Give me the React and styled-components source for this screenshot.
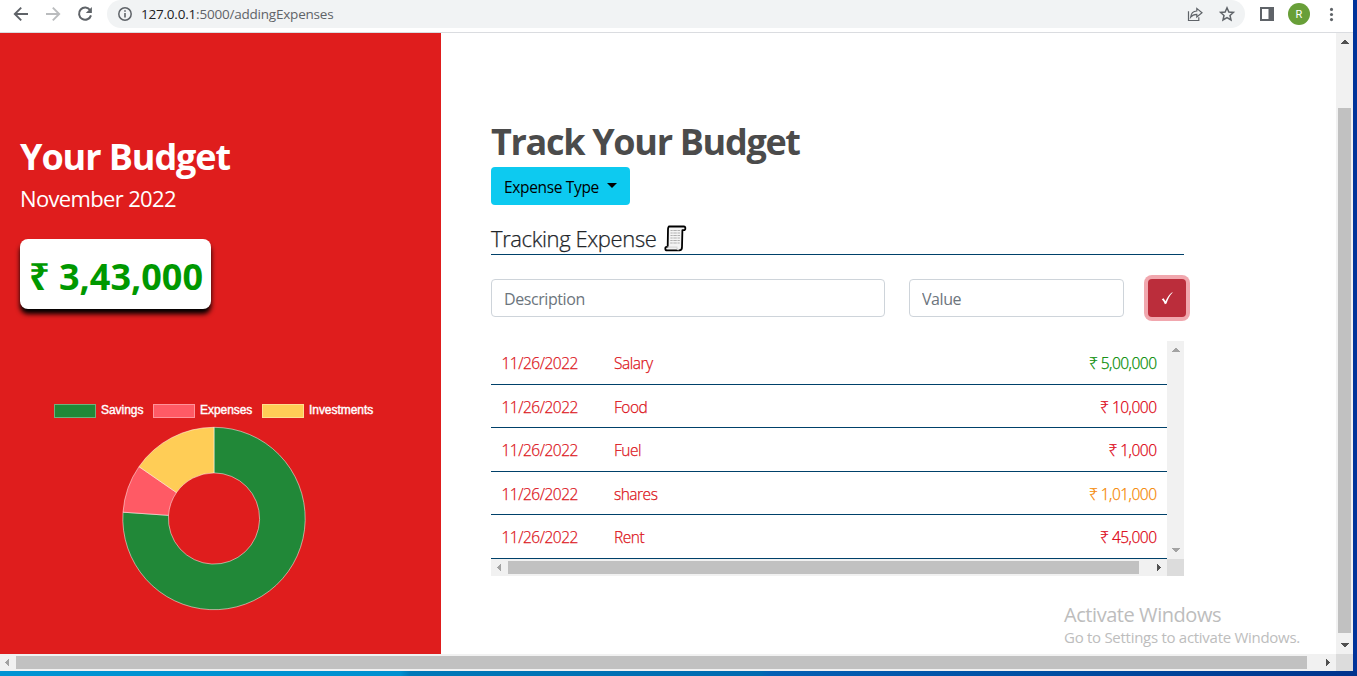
import React from "react";
import styled, { createGlobalStyle } from "styled-components";

const GlobalStyle = createGlobalStyle`
  * { box-sizing: border-box; }
  body { margin: 0; overflow: hidden; font-family: "Open Sans", "Noto Sans", sans-serif; color: #212529; }
  h1, h2, p { margin: 0; }
`;

const Desktop = styled.div`
  width: 1357px;
  height: 676px;
  padding: 0 4px 5px 0;
  background:
    linear-gradient(90deg, #0093d3 0, #0090d0 400px, #0078b8 410px, #006ab0 760px, #0560b4 770px, #004ea2 1050px, #00338d 1357px) left bottom / 100% 5px no-repeat,
    #00339a;
`;

const Browser = styled.div`
  width: 1353px;
  height: 671px;
  background: #fff;
  display: flex;
  flex-direction: column;
  overflow: hidden;
`;

const Toolbar = styled.header`
  height: 33px;
  flex: none;
  display: flex;
  align-items: flex-start;
  border-bottom: 1px solid #dadce0;
`;

const NavButtons = styled.div`
  width: 107px;
  height: 28px;
  padding-left: 12px;
  display: flex;
  align-items: center;
  gap: 14px;
`;

const AddressBar = styled.div`
  width: 1138px;
  height: 28px;
  padding: 0 9px;
  display: flex;
  align-items: center;
  background: #f1f3f4;
  border-radius: 14px;
`;

const Url = styled.span`
  flex: 1;
  margin-left: 7px;
  font-size: 13.5px;
  line-height: 28px;
  letter-spacing: -0.21px;
  color: #5f6368;
  b { font-weight: 400; color: #202124; }
`;

const BarActions = styled.div`
  display: flex;
  align-items: center;
  gap: 14px;
`;

const ToolbarTail = styled.div`
  height: 28px;
  padding-left: 14px;
  display: flex;
  align-items: center;
`;

const Avatar = styled.span`
  width: 22px;
  height: 22px;
  margin: 0 12px 0 13px;
  border-radius: 50%;
  background: #689f38;
  color: #fff;
  font: 11px/23px Roboto, sans-serif;
  text-align: center;
`;

const Viewport = styled.div`
  display: flex;
  height: 621px;
  flex: none;
`;

const Page = styled.main`
  display: flex;
  width: 1336px;
`;

const Sidebar = styled.aside`
  width: 441px;
  padding: 102px 0 0 20px;
  background: #df1d1d;
  color: #fff;
`;

const PanelTitle = styled.h1`
  font-size: 36px;
  line-height: 44px;
  font-weight: 700;
  letter-spacing: -1.08px;
`;

const Month = styled.p`
  margin-top: 5px;
  font-size: 22px;
  line-height: 28px;
  letter-spacing: -0.65px;
`;

const BalanceCard = styled.div`
  width: 191px;
  height: 70px;
  margin-top: 27px;
  padding: 3px 0 0 9px;
  border-radius: 8px;
  background: #fff;
  box-shadow: 0 5px 5px #000;
  color: #009800;
  font-size: 36px;
  line-height: 70px;
  font-weight: 700;
  letter-spacing: 0;
  white-space: nowrap;
`;

const Legend = styled.div`
  display: flex;
  margin: 95px 0 0 34px;
`;

const LegendItem = styled.div`
  width: ${(p) => p.$width}px;
  height: 14px;
  display: flex;
  align-items: center;
  gap: 5px;
  font: 12px/13px "Liberation Sans", sans-serif;
  letter-spacing: -0.05px;
  -webkit-text-stroke: 0.4px #fff;
`;

const Swatch = styled.span`
  width: 42px;
  height: 14px;
  flex: none;
  background: ${(p) => p.$color};
  border: 1px solid rgba(255, 255, 255, 0.35);
`;

const LegendLabel = styled.span`
  height: 14px;
  line-height: 12px;
`;

const Donut = styled.svg`
  display: block;
  margin: 8px 0 0 101px;
`;

const Content = styled.section`
  width: 895px;
  padding: 88px 152px 0 50px;
`;

const ContentTitle = styled.h1`
  font-size: 36px;
  line-height: 42px;
  font-weight: 700;
  letter-spacing: -1.32px;
  color: #4b4b4b;
`;

const TypeButton = styled.button`
  width: 139px;
  height: 38px;
  margin-top: 4px;
  padding: 1px 0 0 13px;
  display: flex;
  align-items: center;
  border: 0;
  border-radius: 4px;
  background: #0dcaf0;
  color: #000;
  font: 400 15.5px/38px "Open Sans", sans-serif;
  letter-spacing: -0.34px;
`;

const Caret = styled.span`
  margin: 0 0 2px 8px;
  border: 5px solid transparent;
  border-top-color: #000;
  border-bottom: 0;
`;

const SectionTitle = styled.h2`
  height: 33px;
  margin-top: 17px;
  display: flex;
  align-items: center;
  gap: 8px;
  border-bottom: 1px solid #00416a;
  font-size: 22px;
  line-height: 32px;
  font-weight: 300;
  letter-spacing: -0.38px;
  -webkit-text-stroke: 0.25px #212529;
`;

const EntryForm = styled.div`
  display: flex;
  margin-top: 24px;
  width: 695px;
`;

const Field = styled.input`
  width: ${(p) => p.$width}px;
  height: 38px;
  margin-right: ${(p) => p.$gap}px;
  padding: 1px 12px 0;
  border: 1px solid #ced4da;
  border-radius: 4px;
  font: 400 16px "Open Sans", sans-serif;
  letter-spacing: -0.42px;
  outline: 0;
  &::placeholder { color: #6c757d; opacity: 1; }
`;

const SubmitButton = styled.button`
  width: 38px;
  height: 38px;
  padding: 0;
  display: grid;
  place-items: center;
  border: 0;
  border-radius: 4px;
  background: #bb2d3b;
  box-shadow: 0 0 0 4px #f1a7ae;
`;

const ListBox = styled.div`
  display: grid;
  grid-template: 218px 17px / 676px 17px;
  margin-top: 24px;
`;

const Rows = styled.div`
  display: grid;
  grid-template-rows: 44px 43px 44px 43px 44px;
`;

const Row = styled.div`
  display: grid;
  grid-template-columns: 112.5px 1fr auto;
  padding: 1px 10.5px 0 10.5px;
  border-bottom: 1px solid #00416a;
  color: #dc1420;
  font-size: 15.5px;
  line-height: 42px;
  font-weight: 300;
  letter-spacing: -0.5px;
  -webkit-text-stroke: 0.25px currentColor;
`;

const Amount = styled.span`
  color: ${(p) => p.$color};
`;

const Track = styled.div`
  display: flex;
  flex-direction: ${(p) => (p.$vertical ? "column" : "row")};
  align-items: center;
  width: ${(p) => (p.$vertical ? "17px" : "auto")};
  height: ${(p) => (p.$vertical ? "auto" : "17px")};
  background: #f1f1f1;
`;

const Thumb = styled.span`
  width: ${(p) => (p.$vertical ? "13px" : p.$size + "px")};
  height: ${(p) => (p.$vertical ? p.$size + "px" : "13px")};
  margin: ${(p) => (p.$vertical ? `${p.$offset || 0}px 0 auto` : "0 auto 0 0")};
  background: #c1c1c1;
`;

const Corner = styled.span`
  width: 17px;
  height: 17px;
  background: #dcdcdc;
`;

const BottomBar = styled.div`
  display: grid;
  grid-template-columns: 1336px 17px;
`;

const Watermark = styled.div`
  position: absolute;
  left: 1064px;
  top: 601px;
  color: #bdbdbd;
  white-space: nowrap;
`;

const WatermarkTitle = styled.p`
  font-size: 20px;
  line-height: 27px;
  letter-spacing: -0.44px;
`;

const WatermarkText = styled.p`
  margin-top: -1px;
  font-size: 15px;
  line-height: 20px;
  letter-spacing: -0.28px;
`;

const arrowPaths = {
  up: "M4 11 8.5 6.500 13 11Z",
  down: "M4 6 8.5 10.5 13 6Z",
  left: "M10 4 5.500 8.5 10 13Z",
  right: "M6.500 4 11 8.5 6.500 13Z",
};

const ScrollArrow = ({ dir, color = "#505050", w = 17, h = 17 }) => (
  <svg width={w} height={h} viewBox="0 0 17 17" style={{ flex: "none" }} shapeRendering="crispEdges">
    <path d={arrowPaths[dir]} fill={color} />
  </svg>
);

const slices = [
  { label: "Savings", value: 500000, color: "#218838", width: 99 },
  { label: "Expenses", value: 56000, color: "#ff5a65", width: 109 },
  { label: "Investments", value: 101000, color: "#ffcd56", width: 120 },
];

const entries = [
  ["Salary", "₹ 5,00,000", "#008a00"],
  ["Food", "₹ 10,000", "#dc0010"],
  ["Fuel", "₹ 1,000", "#dc0010"],
  ["shares", "₹ 1,01,000", "#f58600"],
  ["Rent", "₹ 45,000", "#dc0010"],
];

function DonutChart() {
  const cx = 93, cy = 92.5, R = 91.2, r = 45.6;
  const total = slices.reduce((sum, s) => sum + s.value, 0);
  const point = (radius, a) => `${cx + radius * Math.sin(a)} ${cy - radius * Math.cos(a)}`;
  let start = 0;
  return (
    <Donut width="186" height="186">
      {slices.map((s) => {
        const end = start + (s.value / total) * Math.PI * 2;
        const large = end - start > Math.PI ? 1 : 0;
        const d = `M${point(R, start)}A${R} ${R} 0 ${large} 1 ${point(R, end)}L${point(r, end)}A${r} ${r} 0 ${large} 0 ${point(r, start)}Z`;
        start = end;
        return <path key={s.label} d={d} fill={s.color} stroke="#fff" strokeOpacity="0.5" />;
      })}
    </Donut>
  );
}

const BackIcon = () => (
  <svg width="18" height="18" viewBox="0 0 18 18" fill="none" stroke="#5f6368" strokeWidth="1.9">
    <path d="M16 9H3M9.2 2.6 2.8 9l6.4 6.4" />
  </svg>
);
const ForwardIcon = () => (
  <svg width="18" height="18" viewBox="0 0 18 18" fill="none" stroke="#babcbe" strokeWidth="1.9">
    <path d="M2 9h13M8.8 2.6 15.2 9l-6.4 6.4" />
  </svg>
);
const ReloadIcon = () => (
  <svg width="18" height="18" viewBox="0 0 18 18">
    <path d="M14.2 5.2A6.1 6.1 0 1 0 15 10.4" fill="none" stroke="#5f6368" strokeWidth="2" />
    <path d="M15.9 1.9V8H9.8Z" fill="#5f6368" />
  </svg>
);
const InfoIcon = () => (
  <svg width="18" height="18" viewBox="0 0 18 18">
    <circle cx="9" cy="9" r="6.2" fill="none" stroke="#5f6368" strokeWidth="1.5" />
    <path d="M8.2 8h1.6v4.4H8.2zM8.2 5.3h1.6v1.5H8.2z" fill="#5f6368" />
  </svg>
);
const ShareIcon = () => (
  <svg width="18" height="18" viewBox="0 0 18 18" fill="none" stroke="#5f6368" strokeWidth="1.2">
    <path d="M2.5 6.2v9.3h10.3v-3.3" />
    <path d="M4.6 12.2c.4-3.600 2.600-6 6.200-6.200V3.400L16 7.700l-5.200 4.200V9.300c-2.800 0-4.800 1-6.200 2.900Z" />
  </svg>
);
const StarIcon = () => (
  <svg width="18" height="18" viewBox="0 0 18 18" fill="none" stroke="#5f6368" strokeWidth="1.5">
    <path d="m9 2.800 1.850 4.200 4.550.45-3.400 3.050.98 4.500L9 12.650 5.020 15 6 10.500 2.600 7.450 7.150 7Z" />
  </svg>
);
const PanelIcon = () => (
  <svg width="16" height="18" viewBox="0 0 16 18">
    <path d="M1 2h14v14H1z M3 4v10h6.500V4z" fill="#5f6368" fillRule="evenodd" />
  </svg>
);
const MenuIcon = () => (
  <svg width="18" height="18" viewBox="0 0 18 18" fill="#5f6368">
    <circle cx="9.500" cy="4.400" r="1.550" />
    <circle cx="9.500" cy="9.500" r="1.550" />
    <circle cx="9.500" cy="14.600" r="1.550" />
  </svg>
);
const ScrollIcon = () => (
  <svg width="23" height="27" viewBox="0 0 23 27">
    <path d="M5.200 1.500H20c1.500 0 2 2.700.5 3.700h-2.100L18 22c0 2-1 3.400-2.800 3.400H3c-2.200 0-2.200-3.600-.3-3.600h1L4 4.600C4 2.600 4.600 1.500 5.200 1.500Z" fill="#f4f4f4" stroke="#000" strokeWidth="1.800" strokeLinejoin="round" />
    <path d="M3.500 22.200h9.300c.1 1.700.8 2.500 2 2.500" fill="none" stroke="#d8d8d8" strokeWidth="1.300" />
    <path d="M6.500 5.500h9.500M6.500 8h9.500M6.500 10.500h9.500M6.400 13h9.500M6.300 15.500h9.500M6.200 18h9.500" stroke="#b0b0b0" strokeWidth="1.100" />
    <path d="M9 5v14M13.200 5v14" stroke="#f4f4f4" strokeWidth="0.700" />
  </svg>
);
const CheckIcon = () => (
  <svg width="14" height="16" viewBox="0 0 14 16" fill="#fff">
    <path d="M1.800 9.200 3.600 8.200 5.500 11.300C7 7.800 9.200 4.300 12.200 2.200L12.700 2.600C9.800 5.500 7.800 9.500 6.500 13.600L4.900 14.200C4.200 12.300 3.200 10.600 1.800 9.200Z" />
  </svg>
);

export default function App() {
  return (
    <Desktop>
      <GlobalStyle />
      <Browser>
        <Toolbar>
          <NavButtons>
            <BackIcon />
            <ForwardIcon />
            <ReloadIcon />
          </NavButtons>
          <AddressBar>
            <InfoIcon />
            <Url><b>127.0.0.1</b>:5000/addingExpenses</Url>
            <BarActions>
              <ShareIcon />
              <StarIcon />
            </BarActions>
          </AddressBar>
          <ToolbarTail>
            <PanelIcon />
            <Avatar>R</Avatar>
            <MenuIcon />
          </ToolbarTail>
        </Toolbar>
        <Viewport>
          <Page>
            <Sidebar>
              <PanelTitle>Your Budget</PanelTitle>
              <Month>November 2022</Month>
              <BalanceCard>₹ 3,43,000</BalanceCard>
              <Legend>
                {slices.map((s) => (
                  <LegendItem key={s.label} $width={s.width}>
                    <Swatch $color={s.color} />
                    <LegendLabel>{s.label}</LegendLabel>
                  </LegendItem>
                ))}
              </Legend>
              <DonutChart />
            </Sidebar>
            <Content>
              <ContentTitle>Track Your Budget</ContentTitle>
              <TypeButton>Expense Type<Caret /></TypeButton>
              <SectionTitle>Tracking Expense<ScrollIcon /></SectionTitle>
              <EntryForm>
                <Field placeholder="Description" $width={394} $gap={24} />
                <Field placeholder="Value" $width={215} $gap={24} />
                <SubmitButton aria-label="Add"><CheckIcon /></SubmitButton>
              </EntryForm>
              <ListBox>
                <Rows>
                  {entries.map(([name, amount, color]) => (
                    <Row key={name}>
                      <span>11/26/2022</span>
                      <span>{name}</span>
                      <Amount $color={color}>{amount}</Amount>
                    </Row>
                  ))}
                </Rows>
                <Track $vertical>
                  <ScrollArrow dir="up" color="#a3a3a3" />
                  <Thumb $vertical $size={0} />
                  <ScrollArrow dir="down" color="#a3a3a3" />
                </Track>
                <Track>
                  <ScrollArrow dir="left" color="#a3a3a3" />
                  <Thumb $size={631} />
                  <ScrollArrow dir="right" />
                </Track>
                <Corner />
              </ListBox>
            </Content>
          </Page>
          <Track $vertical>
            <ScrollArrow dir="up" />
            <Thumb $vertical $size={525} $offset={58} />
            <ScrollArrow dir="down" />
          </Track>
        </Viewport>
        <BottomBar>
          <Track>
            <ScrollArrow dir="left" color="#a3a3a3" w={16} />
            <Thumb $size={1291} />
            <ScrollArrow dir="right" />
          </Track>
          <Corner />
        </BottomBar>
      </Browser>
      <Watermark>
        <WatermarkTitle>Activate Windows</WatermarkTitle>
        <WatermarkText>Go to Settings to activate Windows.</WatermarkText>
      </Watermark>
    </Desktop>
  );
}
